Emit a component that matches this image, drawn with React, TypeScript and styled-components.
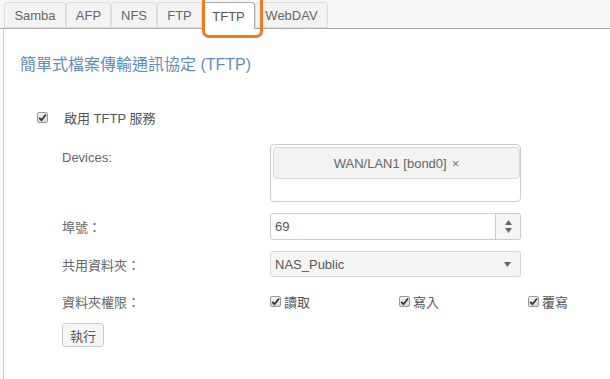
import React from "react";
import styled, { createGlobalStyle } from "styled-components";

const Global = createGlobalStyle`
  html, body { margin: 0; padding: 0; background: #fff; }
  body { font-family: "Liberation Sans", Arial, "Noto Sans CJK TC", sans-serif; color: #555; font-size: 13px; }
`;

const Page = styled.div`
  width: 610px;
  height: 379px;
  overflow: hidden;
  position: relative;
  background: #fff;
`;

const TabBar = styled.div`
  display: flex;
  align-items: flex-end;
  height: 28px;
  padding-left: 4px;
  background: #f6f6f9;
  border-bottom: 1px solid #aaa;
`;

const Tab = styled.div<{ $active?: boolean; $w: number }>`
  box-sizing: border-box;
  width: ${(p) => p.$w}px;
  height: ${(p) => (p.$active ? 27 : 26)}px;
  margin-bottom: ${(p) => (p.$active ? -1 : 0)}px;
  display: flex;
  align-items: center;
  justify-content: center;
  font-size: 13px;
  color: ${(p) => (p.$active ? "#555" : "#666")};
  background: ${(p) => (p.$active ? "#fff" : "#f3f3f3")};
  border: 1px solid ${(p) => (p.$active ? "#aaa" : "#ddd")};
  border-bottom: ${(p) => (p.$active ? "none" : "1px solid #ddd")};
  border-radius: 3px 3px 0 0;
  padding-top: 1px;
`;

const Highlight = styled.div`
  position: absolute;
  left: 202px;
  top: -6px;
  width: 61px;
  height: 44px;
  box-sizing: border-box;
  border: 3px solid #f07a24;
  border-radius: 7px;
  pointer-events: none;
`;

const Panel = styled.div`
  margin-left: 3px;
  border-left: 1px solid #c8c8c8;
  height: 350px;
  padding: 25px 0 0 16px;
  box-sizing: border-box;
`;

const Title = styled.h1`
  margin: 0;
  font-size: 16px;
  font-weight: normal;
  color: #5f8db8;
  line-height: 22px;
`;

const EnableRow = styled.label`
  display: flex;
  align-items: center;
  margin: 33px 0 0 17px;
  height: 16px;
  font-size: 13px;
  color: #555;
`;

const EnableText = styled.span`
  margin-left: 16px;
`;

const Form = styled.div`
  display: grid;
  grid-template-columns: 208px 251px;
  row-gap: 11px;
  margin: 19px 0 0 42px;
  align-items: center;
`;

const Label = styled.div<{ $top?: boolean; $shift?: number }>`
  font-size: 13px;
  color: #666;
  align-self: ${(p) => (p.$top ? "start" : "center")};
  padding-top: ${(p) => (p.$top ? "6px" : "0")};
  margin-top: ${(p) => p.$shift ?? 0}px;
`;

const DeviceBox = styled.div`
  box-sizing: border-box;
  height: 58px;
  border: 1px solid #ccc;
  border-radius: 4px;
  padding: 2px 0 0 2px;
  background: #fff;
`;

const DeviceTag = styled.div`
  box-sizing: border-box;
  height: 32px;
  background: #f3f3f3;
  border: 1px solid #d8d8d8;
  border-radius: 4px;
  display: flex;
  align-items: center;
  justify-content: center;
  font-size: 13px;
  color: #666;
`;

const TagX = styled.span`
  margin-left: 5px;
  color: #777;
`;

const InputBox = styled.div`
  box-sizing: border-box;
  height: 27px;
  border: 1px solid #ccc;
  border-radius: 3px;
  display: flex;
  align-items: stretch;
  background: #fff;
`;

const InputText = styled.div`
  flex: 1;
  display: flex;
  align-items: center;
  padding-left: 4px;
  font-size: 13px;
  color: #555;
`;

const Spinner = styled.div`
  width: 24px;
  border-left: 1px solid #ccc;
  background: #f5f5f5;
  display: flex;
  flex-direction: column;
  align-items: center;
  justify-content: center;
  gap: 3px;
  border-radius: 0 3px 3px 0;
`;

const SelectBox = styled.div`
  box-sizing: border-box;
  height: 26px;
  border: 1px solid #d4d4d4;
  border-radius: 3px;
  background: #f5f5f5;
  display: flex;
  align-items: center;
  justify-content: space-between;
  padding: 0 9px 0 4px;
  font-size: 13px;
  color: #555;
`;

const Perms = styled.div<{ $shift?: number }>`
  display: grid;
  grid-template-columns: 129px 129px auto;
  width: 300px;
  margin-top: ${(p) => p.$shift ?? 0}px;
`;

const Perm = styled.label`
  display: flex;
  align-items: center;
  gap: 3px;
  font-size: 13px;
  color: #555;
`;

const Box = styled.span`
  box-sizing: border-box;
  width: 11px;
  height: 11px;
  border: 1px solid #999;
  border-radius: 2px;
  background: linear-gradient(#f4f4f4, #d8d8d8);
  display: inline-flex;
  align-items: center;
  justify-content: center;
`;

const Button = styled.button`
  margin: 12px 0 0 42px;
  height: 24px;
  width: 42px;
  box-sizing: border-box;
  border: 1px solid #ccc;
  border-radius: 3px;
  background: #f5f5f5;
  font-family: inherit;
  font-size: 13px;
  color: #555;
  padding: 0;
`;

const Check = () => (
  <Box>
    <svg width="9" height="9" viewBox="0 0 9 9">
      <path d="M1.2 4.8 L3.5 7.2 L8 1.5" fill="none" stroke="#333" strokeWidth="1.8" />
    </svg>
  </Box>
);

const Tri = ({ up }: { up?: boolean }) => (
  <svg width="7" height="5" viewBox="0 0 7 5">
    <path d={up ? "M0 5 L3.5 0 L7 5 Z" : "M0 0 L3.5 5 L7 0 Z"} fill="#666" />
  </svg>
);

export default function App() {
  const tabs: [string, number][] = [
    ["Samba", 62],
    ["AFP", 45],
    ["NFS", 46],
    ["FTP", 45],
    ["TFTP", 53],
    ["WebDAV", 73],
  ];
  return (
    <Page>
      <Global />
      <TabBar>
        {tabs.map(([t, w]) => (
          <Tab key={t} $w={w} $active={t === "TFTP"}>
            {t}
          </Tab>
        ))}
      </TabBar>
      <Highlight />
      <Panel>
        <Title>簡單式檔案傳輸通訊協定 (TFTP)</Title>
        <EnableRow>
          <Check />
          <EnableText>啟用 TFTP 服務</EnableText>
        </EnableRow>
        <Form>
          <Label $top>Devices:</Label>
          <DeviceBox>
            <DeviceTag>
              WAN/LAN1 [bond0]<TagX>×</TagX>
            </DeviceTag>
          </DeviceBox>
          <Label>埠號：</Label>
          <InputBox>
            <InputText>69</InputText>
            <Spinner>
              <Tri up />
              <Tri />
            </Spinner>
          </InputBox>
          <Label>共用資料夾：</Label>
          <SelectBox>
            NAS_Public
            <Tri />
          </SelectBox>
          <Label $shift={4}>資料夾權限：</Label>
          <Perms $shift={4}>
            <Perm>
              <Check />
              讀取
            </Perm>
            <Perm>
              <Check />
              寫入
            </Perm>
            <Perm>
              <Check />
              覆寫
            </Perm>
          </Perms>
        </Form>
        <Button>執行</Button>
      </Panel>
    </Page>
  );
}
